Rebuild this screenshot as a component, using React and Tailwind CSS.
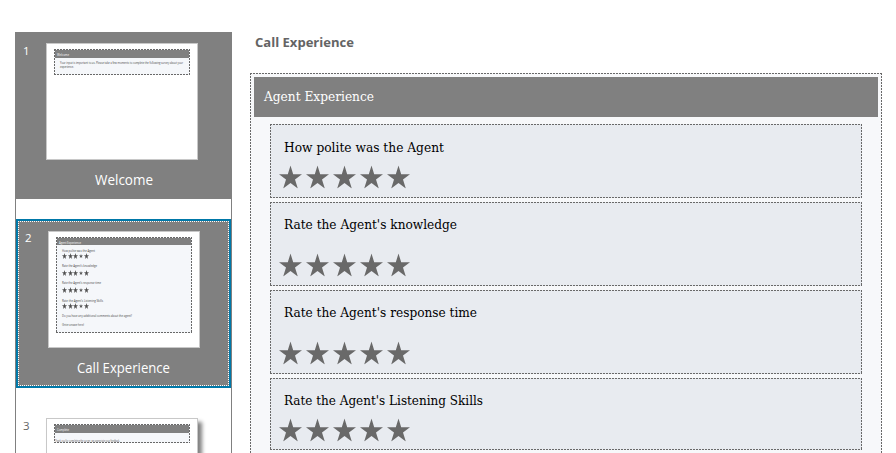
const QUESTIONS = [
  { text: 'How polite was the Agent', height: 'h-[74px]', gap: 'mt-[9px]', top: 'pt-[12px]', width: 160 },
  { text: "Rate the Agent's knowledge", height: 'h-[84px]', gap: 'mt-[20px]', top: 'pt-[11px]', width: 173 },
  { text: "Rate the Agent's response time", height: 'h-[84px]', gap: 'mt-[20px]', top: 'pt-[11px]', width: 193 },
  { text: "Rate the Agent's Listening Skills", height: 'h-[72px]', gap: 'mt-[9px]', top: 'pt-[11px]', width: 199 },
];

const MINI = [
  { text: 'How polite was the Agent', height: 'h-[15px]', gap: 'mt-[0px]', width: 33 },
  { text: 'Rate the Agent’s knowledge', height: 'h-[17px]', gap: 'mt-[2px]', width: 35 },
  { text: 'Rate the Agent’s response time', height: 'h-[18px]', gap: 'mt-[2px]', width: 39 },
  { text: 'Rate the Agent’s Listening Skills', height: 'h-[15px]', gap: 'mt-[0px]', width: 41 },
];

const STAR = '11.5,0 14.2,8.7 23,8.7 16,14 18.8,23 11.5,17.6 4.2,23 7,14 0,8.7 8.8,8.7';

// Fine 2px-on, 1px-off outline painted along the four edges; the padding keeps content inside it.
const DASHED =
  'p-px bg-no-repeat bg-[image:repeating-linear-gradient(90deg,#696969_0_2px,transparent_2px_3px),repeating-linear-gradient(90deg,#696969_0_2px,transparent_2px_3px),repeating-linear-gradient(180deg,#696969_0_2px,transparent_2px_3px),repeating-linear-gradient(180deg,#696969_0_2px,transparent_2px_3px)] bg-size-[100%_1px,100%_1px,1px_100%,1px_100%] bg-position-[0_0,0_100%,0_0,100%_0]';

function Star({ className }) {
  return (
    <svg viewBox="0 0 23 23" preserveAspectRatio="none" className={className} fill="currentColor">
      <polygon points={STAR} />
    </svg>
  );
}

// One line of text set to an exact advance width.
function Line({ width, height, baseline, className, children }) {
  return (
    <svg width={width + 2} height={height} className={'block shrink-0 overflow-visible ' + className}>
      <text x="0" y={baseline} textLength={width} lengthAdjust="spacingAndGlyphs" fill="currentColor">
        {children}
      </text>
    </svg>
  );
}

const SERIF = "font-['DejaVu_Serif_Condensed','DejaVu_Serif',serif]";
const MINI_SANS = "font-['Open_Sans',sans-serif] text-[3.2px]";

function Sidebar() {
  return (
    <aside className="w-[217px] h-[421px] shrink-0 border-x border-[#808080] overflow-hidden">
      <section className="h-[167px] bg-[#808080] text-white flex flex-col relative">
        <span className="absolute left-[7px] top-[11px] text-[11.5px] leading-[16px]">1</span>
        <div className="ml-[30px] mt-[11px] w-[152px] h-[117px] bg-white border border-[#c8c8c8] pl-[7px] pt-[5px]">
          <div className={DASHED + ' w-[136px] h-[26px] bg-[#f5f7fa]'}>
            <div className="h-[8px] bg-[#808080] pl-[2px] pt-[2px]">
              <Line width={12} height={5} baseline={4} className={MINI_SANS}>Welcome</Line>
            </div>
            <div className="pl-[5px] pt-[3px] text-[#444]">
              <Line width={123} height={4} baseline={3.2} className={MINI_SANS}>Your input is important to us. Please take a few moments to complete the following survey about your</Line>
              <Line width={14} height={4} baseline={3.2} className={MINI_SANS}>experience.</Line>
            </div>
          </div>
        </div>
        <div className="ml-[78.5px] mt-[11px]">
          <Line width={58} height={20} baseline={14} className="text-[14px]">Welcome</Line>
        </div>
      </section>

      <section className="mt-[20px] h-[169px] border-2 border-[#0078a8] bg-[#808080] text-white">
        <div className="h-full border border-dotted border-white relative">
          <span className="absolute left-[6px] top-[8px] text-[11.5px] leading-[16px]">2</span>
          <div className="ml-[29px] mt-[9px] w-[152px] h-[117px] bg-white border border-[#c8c8c8] pl-[7px] pt-[5px]">
            <div className={DASHED + ' w-[136px] h-[96px] bg-[#f5f7fa]'}>
              <div className="h-[7px] bg-[#808080] pl-[2px] pt-[1.5px]">
                <Line width={22} height={5} baseline={3.8} className={MINI_SANS}>Agent Experience</Line>
              </div>
              <div className="pl-[5px] pt-[4px] text-[#444]">
                {MINI.map((m) => (
                  <div key={m.text} className={m.height}>
                    <Line width={m.width} height={4} baseline={3.2} className={MINI_SANS}>{m.text}</Line>
                    <div className={m.gap + ' flex items-center gap-[0.5px] text-[#505050]'}>
                      <Star className="w-[5px] h-[6px]" />
                      <Star className="w-[5px] h-[6px]" />
                      <Star className="w-[5px] h-[6px]" />
                      <Star className="w-[4px] h-[4px] mx-[0.5px]" />
                      <Star className="w-[5px] h-[6px]" />
                    </div>
                  </div>
                ))}
                <Line width={70} height={9} baseline={3.2} className={MINI_SANS}>Do you have any additional comments about the agent?</Line>
                <Line width={22} height={4} baseline={3.4} className={MINI_SANS}>(Enter answer here)</Line>
              </div>
            </div>
          </div>
          <div className="ml-[58px] mt-[11px]">
            <Line width={93} height={20} baseline={14} className="text-[14px]">Call Experience</Line>
          </div>
        </div>
      </section>

      <section className="mt-[20px] relative h-[60px] text-[#666]">
        <span className="absolute left-[7px] top-[10px] text-[11.5px] leading-[16px]">3</span>
        <div className="h-[10px]" />
        <div className="ml-[30px] w-[152px] h-[117px] bg-white border border-[#c8c8c8] shadow-[4px_4px_4px_#808080] pl-[7px] pt-[5px]">
          <div className={DASHED + ' w-[136px] h-[19px] bg-[#f5f7fa]'}>
            <div className="h-[8px] bg-[#808080] pl-[2px] pt-[2px] text-white">
              <Line width={12} height={5} baseline={4} className={MINI_SANS}>Complete</Line>
            </div>
            <div className="pt-[6px] text-[#555]">
              <Line width={65} height={4} baseline={3} className={MINI_SANS}>Thank you for completing the survey, we appreciate your feedback.</Line>
            </div>
          </div>
        </div>
      </section>
    </aside>
  );
}

export default function App() {
  return (
    <div className="w-[896px] h-[453px] overflow-hidden bg-white flex pl-[15px] pt-[32px] font-['Open_Sans','Noto_Sans',sans-serif]">
      <Sidebar />
      <main className="ml-[18px] w-[632px] shrink-0">
        <h1 className="ml-[5px] h-[41px] pt-[1px] text-[#646464]">
          <Line width={99} height={20} baseline={14} className="text-[13px] font-bold">Call Experience</Line>
        </h1>
        <div className={DASHED + ' ' + SERIF + ' h-[420px] bg-[#f7f8fa]'}>
          <div className="p-[3px]">
            <h2 className="h-[40px] bg-[#808080] text-white pl-[10px] pt-[9.5px]">
              <Line width={110} height={20} baseline={14} className="text-[13.5px]">Agent Experience</Line>
            </h2>
            <div className="mt-[7px] mx-[16px] flex flex-col gap-[4px]">
              {QUESTIONS.map((q) => (
                <div key={q.text} className={DASHED + ' ' + q.height + ' shrink-0 bg-[#e8ebf0]'}>
                  <div className={q.top}>
                    <Line width={q.width} height={20} baseline={15} className="text-[13.5px] ml-[13px] text-black">{q.text}</Line>
                    <div className={q.gap + ' ml-[8px] -translate-y-[0.5px] flex gap-[4px] text-[#696969]'}>
                      <Star className="w-[23px] h-[23px]" />
                      <Star className="w-[23px] h-[23px]" />
                      <Star className="w-[23px] h-[23px]" />
                      <Star className="w-[23px] h-[23px]" />
                      <Star className="w-[23px] h-[23px]" />
                    </div>
                  </div>
                </div>
              ))}
            </div>
          </div>
        </div>
      </main>
    </div>
  );
}
